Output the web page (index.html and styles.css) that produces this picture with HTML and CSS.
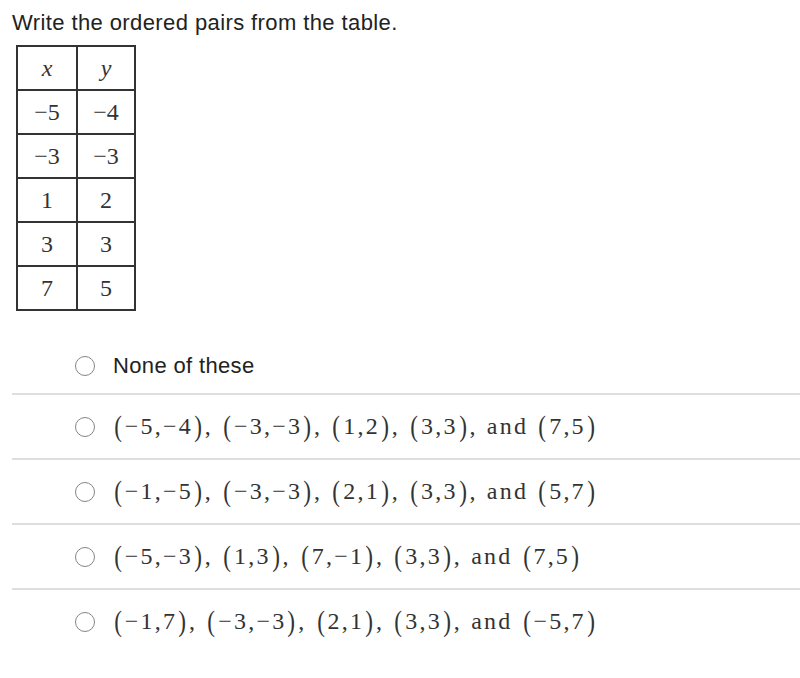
FILE: index.html
```html
<!DOCTYPE html>
<html>
<head>
<meta charset="utf-8">
<link rel="stylesheet" href="styles.css">
</head>
<body>
<p class="prompt">Write the ordered pairs from the table.</p>
<table class="xy">
  <tr><td><i>x</i></td><td><i>y</i></td></tr>
  <tr><td>−5</td><td>−4</td></tr>
  <tr><td>−3</td><td>−3</td></tr>
  <tr><td>1</td><td>2</td></tr>
  <tr><td>3</td><td>3</td></tr>
  <tr><td>7</td><td>5</td></tr>
</table>
<ul class="choices">
  <li class="choice first"><span class="radio"></span><span class="label">None of these</span></li>
  <li class="choice"><span class="radio"></span><span class="math"><span class="par">(</span>−5,−4<span class="par">)</span>, <span class="par">(</span>−3,−3<span class="par">)</span>, <span class="par">(</span>1,2<span class="par">)</span>, <span class="par">(</span>3,3<span class="par">)</span>, and <span class="par">(</span>7,5<span class="par">)</span></span></li>
  <li class="choice"><span class="radio"></span><span class="math"><span class="par">(</span>−1,−5<span class="par">)</span>, <span class="par">(</span>−3,−3<span class="par">)</span>, <span class="par">(</span>2,1<span class="par">)</span>, <span class="par">(</span>3,3<span class="par">)</span>, and <span class="par">(</span>5,7<span class="par">)</span></span></li>
  <li class="choice"><span class="radio"></span><span class="math"><span class="par">(</span>−5,−3<span class="par">)</span>, <span class="par">(</span>1,3<span class="par">)</span>, <span class="par">(</span>7,−1<span class="par">)</span>, <span class="par">(</span>3,3<span class="par">)</span>, and <span class="par">(</span>7,5<span class="par">)</span></span></li>
  <li class="choice"><span class="radio"></span><span class="math"><span class="par">(</span>−1,7<span class="par">)</span>, <span class="par">(</span>−3,−3<span class="par">)</span>, <span class="par">(</span>2,1<span class="par">)</span>, <span class="par">(</span>3,3<span class="par">)</span>, and <span class="par">(</span>−5,7<span class="par">)</span></span></li>
</ul>
</body>
</html>
```
FILE: styles.css
```css
html, body {
  margin: 0;
  padding: 0;
  background: #fff;
}
body {
  font-family: "Liberation Sans", Arial, sans-serif;
  color: #222;
}
.prompt {
  margin: 0;
  padding: 10px 0 0 12px;
  font-size: 22px;
  line-height: 26px;
  letter-spacing: 0.4px;
}
.xy {
  margin: 9px 0 0 16px;
  border-collapse: collapse;
  font-family: "Liberation Serif", serif;
  font-size: 24px;
  color: #333;
}
.xy td {
  border: 2px solid #333;
  height: 42px;
  padding: 0;
  text-align: center;
  vertical-align: middle;
}
.xy td:first-child { width: 58px; }
.xy td:last-child { width: 56px; }
.choices {
  list-style: none;
  margin: 19px 0 0 12px;
  padding: 0;
}
.choice {
  display: flex;
  align-items: center;
  height: 63px;
  border-bottom: 2px solid #dedede;
}
.choice.first {
  box-sizing: border-box;
  height: 65px;
  padding-top: 8px;
}
.choice:last-child {
  border-bottom: none;
}
.radio {
  box-sizing: border-box;
  width: 20px;
  height: 20px;
  border: 1.5px solid #858585;
  border-radius: 50%;
  margin-left: 63px;
  margin-right: 18px;
  flex: none;
}
.label {
  font-size: 22px;
  letter-spacing: 0.35px;
  color: #222;
}
.math {
  font-family: "Liberation Serif", serif;
  font-size: 24px;
  color: #333;
  letter-spacing: 2.2px;
  word-spacing: 1px;
}
.par {
  font-size: 29px;
  display: inline-block;
  transform: scaleX(0.8);
  vertical-align: -2px;
}
```
